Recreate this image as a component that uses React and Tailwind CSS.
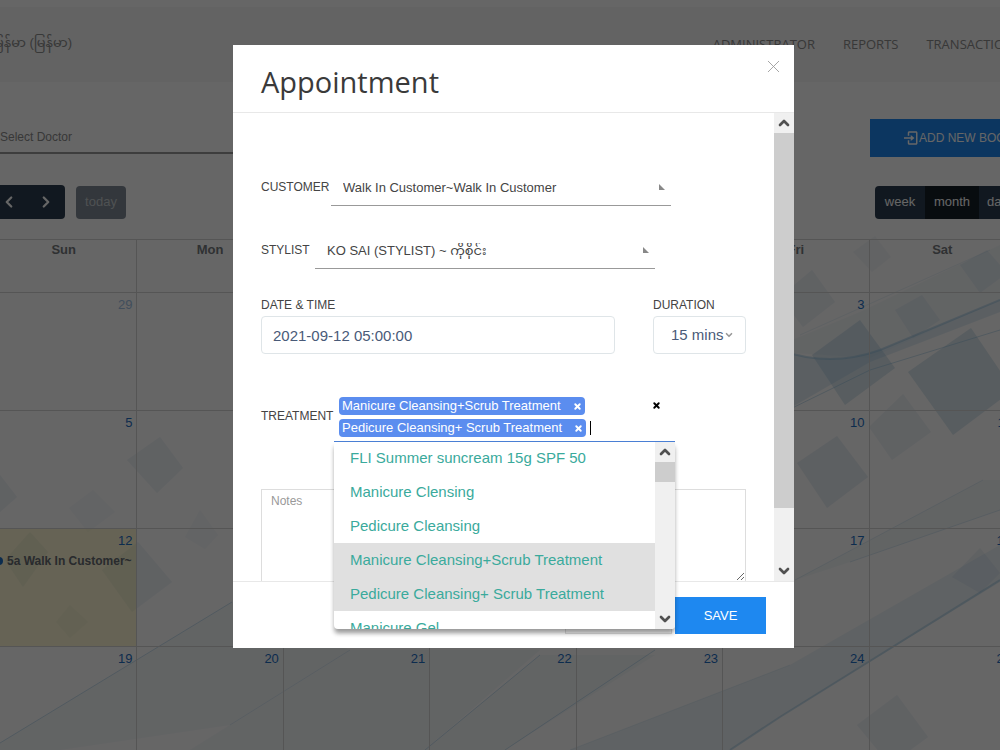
import React, { useState } from 'react';
import { ChevronLeft, ChevronRight, ChevronUp, ChevronDown, X } from 'lucide-react';
import { BiLogIn } from 'react-icons/bi';

const days = ['Sun', 'Mon', 'Tue', 'Wed', 'Thu', 'Fri', 'Sat'];

const weeks = [
  [29, 30, 31, 1, 2, 3, 4],
  [5, 6, 7, 8, 9, 10, 11],
  [12, 13, 14, 15, 16, 17, 18],
  [19, 20, 21, 22, 23, 24, 25],
];

const treatments = [
  'FLI Summer suncream 15g SPF 50',
  'Manicure Clensing',
  'Pedicure Cleansing',
  'Manicure Cleansing+Scrub Treatment',
  'Pedicure Cleansing+ Scrub Treatment',
  'Manicure Gel',
];

// Decorative squares and waves behind the calendar
const Backdrop = () => (
  <svg
    className="absolute inset-0 h-full w-full opacity-60"
    viewBox="0 0 1000 750"
    preserveAspectRatio="none"
    aria-hidden="true"
  >
    <g fill="#4a7fb5" fillOpacity="0.14">
      <path d="M812 270L835 302L803 327L780 297Z" />
      <path d="M922 295L940 320L913 338L895 310Z" />
      <path d="M987 250L1007 273L980 293L960 265Z" />
      <path d="M875 236L891 257L872 272L853 252Z" fillOpacity="0.08" />
      <path d="M903 394L931 432L892 460L869 427Z" />
      <path d="M837 436L868 477L827 508L797 463Z" fillOpacity="0.2" />
      <path d="M897 695L928 737L890 765L857 725Z" />
      <path d="M980 548L1000 573L980 593L952 577Z" />
      <path d="M160 437L183 468L157 493L127 460Z" />
      <path d="M138 542L172 582L132 612L102 570Z" />
      <path d="M30 532L48 552L23 587L5 560Z" />
      <path d="M70 605L88 622L70 638L56 622Z" fillOpacity="0.08" />
      <path d="M93 490L115 512L88 532L69 508Z" fillOpacity="0.06" />
      <path d="M200 510L218 535L205 549L185 537Z" fillOpacity="0.06" />
      <path d="M0 475L17 497L0 512Z" />
    </g>
    <g fill="#3d83b0" fillOpacity="0.3">
      <path d="M860 320L895 368L845 405L812 355Z" />
      <path d="M971 328L1013 390L953 435L908 372Z" />
    </g>
    <g fill="#3d8ec4" fillOpacity="0.08">
      <path d="M780 350Q830 368 880 350L1000 300V312L870 362L780 414Z" fillOpacity="0.24" />
      <path d="M780 345L860 312L1000 245V300L870 358L780 352Z" />
      <path d="M0 743L232 602L350 650L230 725L60 750H0Z" />
      <path d="M230 725L350 650H540L425 750H190Z" />
      <path d="M425 750L540 655H655L505 750Z" />
      <path d="M570 750L790 665L1000 545V582L780 717L730 750Z" fillOpacity="0.15" />
      <path d="M795 580L983 480H1000V510L850 562Z" />
    </g>
    <g fill="none" stroke="#2f86c0" strokeOpacity="0.4">
      <path d="M780 350Q830 368 880 350L1000 300" strokeWidth="2" />
      <path d="M780 414L870 370L1000 330" />
      <path d="M800 335L990 250" strokeOpacity="0.15" />
      <path d="M0 743L232 602" />
      <path d="M230 725L350 650" strokeOpacity="0.2" />
      <path d="M425 750L540 655" />
      <path d="M505 750L655 650" />
      <path d="M570 750L790 665" strokeOpacity="0.15" />
      <path d="M730 750L780 717L1000 580" strokeWidth="2" />
      <path d="M795 580L983 480" strokeOpacity="0.2" />
      <path d="M850 562L1000 510" strokeOpacity="0.25" />
    </g>
  </svg>
);

const Calendar = () => (
  <div className="-ml-[10px] w-[calc(100%+26px)] text-[13px]">
    <div className="flex items-center justify-between pb-5">
      <div className="flex items-center gap-[11px]">
        <div className="flex rounded bg-[#2c3e50] text-white">
          <button type="button" aria-label="Previous" className="flex h-[34px] w-[37px] items-center justify-center">
            <ChevronLeft size={18} strokeWidth={3} />
          </button>
          <button type="button" aria-label="Next" className="flex h-[34px] w-[38px] items-center justify-center">
            <ChevronRight size={18} strokeWidth={3} />
          </button>
        </div>
        <button type="button" className="h-[33px] w-[50px] rounded bg-[#808b96] text-[#c4cace]">today</button>
      </div>
      <div className="flex overflow-hidden rounded bg-[#2c3e50] text-white">
        <button type="button" className="h-[33px] w-[50px]">week</button>
        <button type="button" className="h-[33px] w-[54px] bg-[#151e27]">month</button>
        <button type="button" className="h-[33px] w-[37px]">day</button>
      </div>
    </div>
    <table className="w-full table-fixed border-collapse">
      <thead>
        <tr className="h-[53px]">
          {days.map((day) => (
            <th key={day} scope="col" className="border border-[#d4d4d4] pt-[2px] align-top font-bold leading-4 text-[#777b80]">
              {day}
            </th>
          ))}
        </tr>
      </thead>
      <tbody>
        {weeks.map((week) => (
          <tr key={week[0]} className="h-[118px]">
            {week.map((date) => (
              <td
                key={date}
                className={`border border-[#d4d4d4] pt-1 align-top leading-4 ${date === 12 ? 'bg-[#ffdc2833]' : ''}`}
              >
                <div className={`pr-1 text-right ${date > 28 ? 'text-[#a3c4e6]' : 'text-[#1f6fc4]'}`}>{date}</div>
                {date === 12 && (
                  <div className="mt-1 flex items-center gap-1 overflow-hidden whitespace-nowrap pl-1 text-[12px] font-bold text-[#666b72]">
                    <span className="h-2 w-2 shrink-0 rounded-full bg-[#1f6fc4]" />
                    5a Walk In Customer~
                  </div>
                )}
              </td>
            ))}
          </tr>
        ))}
      </tbody>
    </table>
  </div>
);

const Page = () => (
  <div className="relative h-full overflow-hidden bg-white pt-[7px]">
    <Backdrop />
    <div className="relative">
      <header className="flex h-[75px] items-center justify-between bg-[#f7f7f7] text-[13px] text-[#8c8c8c]">
        <a href="#language" className="-ml-2 whitespace-nowrap pb-1">မြန်မာ (မြန်မာ)</a>
        <nav className="-mr-[21px] flex gap-7 font-['Open_Sans',sans-serif]">
          <a href="#administrator">ADMINISTRATOR</a>
          <a href="#reports">REPORTS</a>
          <a href="#transactions">TRANSACTIONS</a>
        </nav>
      </header>
      <div className="-mr-[66px] flex items-start justify-between pb-7 pt-[37px]">
        <select
          aria-label="Doctor"
          className="h-[35px] w-[360px] appearance-none border-b-2 border-[#999] pt-[2px] text-[12px] text-[#8c8c8c]"
        >
          <option>Select Doctor</option>
        </select>
        <button
          type="button"
          className="flex h-[38px] w-[196px] items-center justify-center whitespace-nowrap bg-[#1e88f0] text-[12px] text-white"
        >
          <BiLogIn size={18} />
          ADD NEW BOOKING
        </button>
      </div>
      <Calendar />
    </div>
  </div>
);

const ScrollBar = ({ thumb }) => (
  <div className="flex w-5 shrink-0 flex-col justify-between bg-[#f0f0f0] text-[#505050]">
    <div className="flex min-h-0 flex-1 flex-col">
      <ChevronUp className="h-5 w-5 shrink-0 px-[2px]" strokeWidth={4} />
      <div className={`bg-[#cdcdcd] ${thumb}`} />
    </div>
    <ChevronDown className="h-5 w-5 shrink-0 px-[2px]" strokeWidth={4} />
  </div>
);

const UnderlineSelect = ({ id, label, labelWidth, value }) => (
  <div className="flex items-center gap-[3px]">
    <label htmlFor={id} className={`whitespace-nowrap ${labelWidth}`}>{label}</label>
    <div className="flex h-[38px] w-[340px] items-center border-b border-[#999] pr-[6px]">
      <select id={id} className="h-full flex-1 appearance-none pl-3 pt-[2px] text-[13px] text-[#444]">
        <option>{value}</option>
      </select>
      <svg width="6" height="6" viewBox="0 0 6 6" fill="#888" aria-hidden="true">
        <path d="M0 0L6 6H0Z" />
      </svg>
    </div>
  </div>
);

const App = () => {
  const [selected, setSelected] = useState([treatments[3], treatments[4]]);

  const toggle = (name) => {
    setSelected(selected.includes(name) ? selected.filter((item) => item !== name) : [...selected, name]);
  };

  return (
    <div className="h-screen overflow-hidden font-['Liberation_Sans','Noto_Sans_Myanmar',sans-serif]">
      <Page />
      <div className="fixed inset-0 flex items-start justify-center bg-black/60 pl-[27px] pt-[45px]">
        <div role="dialog" aria-labelledby="title" className="w-full max-w-[561px] bg-white text-[12px] leading-4 text-[#444]">
          <div className="flex h-[68px] items-start justify-between border-b border-[#e8e8e8] pl-7 pr-[10px]">
            <h1 id="title" className="pt-[17px] font-['Open_Sans',sans-serif] text-[29px] leading-10 text-[#3a3a3a]">
              Appointment
            </h1>
            <button type="button" aria-label="Close" className="mt-[11px] text-[#999]">
              <X size={21} strokeWidth={1} />
            </button>
          </div>

          <div className="flex border-b border-[#e8e8e8]">
            <form className="flex-1 px-7 pt-[55px]">
              <UnderlineSelect id="customer" label="CUSTOMER" labelWidth="w-[67px]" value="Walk In Customer~Walk In Customer" />
              <div className="mt-[25px]">
                <UnderlineSelect id="stylist" label="STYLIST" labelWidth="w-[51px]" value="KO SAI (STYLIST) ~ ကိုစိုင်း" />
              </div>

              <div className="mt-7 flex gap-[38px]">
                <div className="flex-1">
                  <label htmlFor="date" className="block">DATE &amp; TIME</label>
                  <input
                    id="date"
                    defaultValue="2021-09-12 05:00:00"
                    className="mt-[3px] h-[38px] w-full rounded border border-[#dfe5e8] px-[11px] text-[15px] text-[#495a78]"
                  />
                </div>
                <div className="w-[93px]">
                  <label htmlFor="duration" className="block">DURATION</label>
                  <div className="mt-[3px] flex h-[38px] items-center rounded border border-[#dfe5e8] pl-[17px]">
                    <select id="duration" className="appearance-none text-[15px] text-[#495a78]">
                      <option>15 mins</option>
                    </select>
                    <ChevronDown size={10} strokeWidth={4} className="text-[#999]" />
                  </div>
                </div>
              </div>

              <div className="mt-[35px] flex items-center gap-[3px]">
                <label htmlFor="treatment" className="w-[70px] whitespace-nowrap">TREATMENT</label>
                <div className="relative flex w-[341px] shrink-0 items-start justify-between border-b border-[#4a7fd4] pb-1 pl-[5px] pr-[14px] pt-2">
                  <div className="flex flex-1 flex-wrap gap-1">
                    {selected.map((name) => (
                      <span key={name} className="flex h-[18px] items-center gap-3 whitespace-nowrap rounded bg-[#5b8def] px-[3px] text-[13px] text-white">
                        {name}
                        <button type="button" aria-label={`Remove ${name}`} onClick={() => toggle(name)}>
                          <X size={9} strokeWidth={5} />
                        </button>
                      </span>
                    ))}
                    <span className="flex items-center">
                      <span className="h-[14px] w-px bg-black" />
                      <input id="treatment" className="w-5 outline-none" />
                    </span>
                  </div>
                  <button type="button" aria-label="Clear all" className="pt-1 text-black" onClick={() => setSelected([])}>
                    <X size={9} strokeWidth={5} />
                  </button>

                  <div className="absolute left-0 top-full z-10 mt-px flex h-[187px] w-full overflow-hidden rounded-b-sm bg-white shadow-[0_5px_5px_-1px_rgba(0,0,0,0.3),0_4px_4px_rgba(0,0,0,0.15)]">
                    <ul role="listbox" aria-label="Treatments" className="-mt-px flex-1 text-[15px] text-[#3aaa9c]">
                      {treatments.map((name) => (
                        <li
                          key={name}
                          role="option"
                          aria-selected={selected.includes(name)}
                          onClick={() => toggle(name)}
                          className={`flex h-[34px] items-center pl-4 ${selected.includes(name) ? 'bg-[#e0e0e0]' : ''}`}
                        >
                          {name}
                        </li>
                      ))}
                    </ul>
                    <ScrollBar thumb="h-5" />
                  </div>
                </div>
              </div>

              <textarea
                aria-label="Notes"
                placeholder="Notes"
                className="mt-[47px] block h-[92px] w-full border border-b-0 border-[#ddd] px-[9px] py-[3px] text-[12px] placeholder:text-[#999]"
              />
            </form>
            <ScrollBar thumb="h-[375px]" />
          </div>

          <div className="flex justify-end gap-[3px] px-7 pb-[14px] pt-[15px]">
            <button type="button" className="h-[37px] w-[107px] border border-[#ddd] bg-[#f8f8f8] text-[13px]">CLOSE</button>
            <button type="button" className="h-[37px] w-[91px] bg-[#1e88f0] text-[13px] text-white">SAVE</button>
          </div>
        </div>
      </div>
    </div>
  );
};

export default App;
